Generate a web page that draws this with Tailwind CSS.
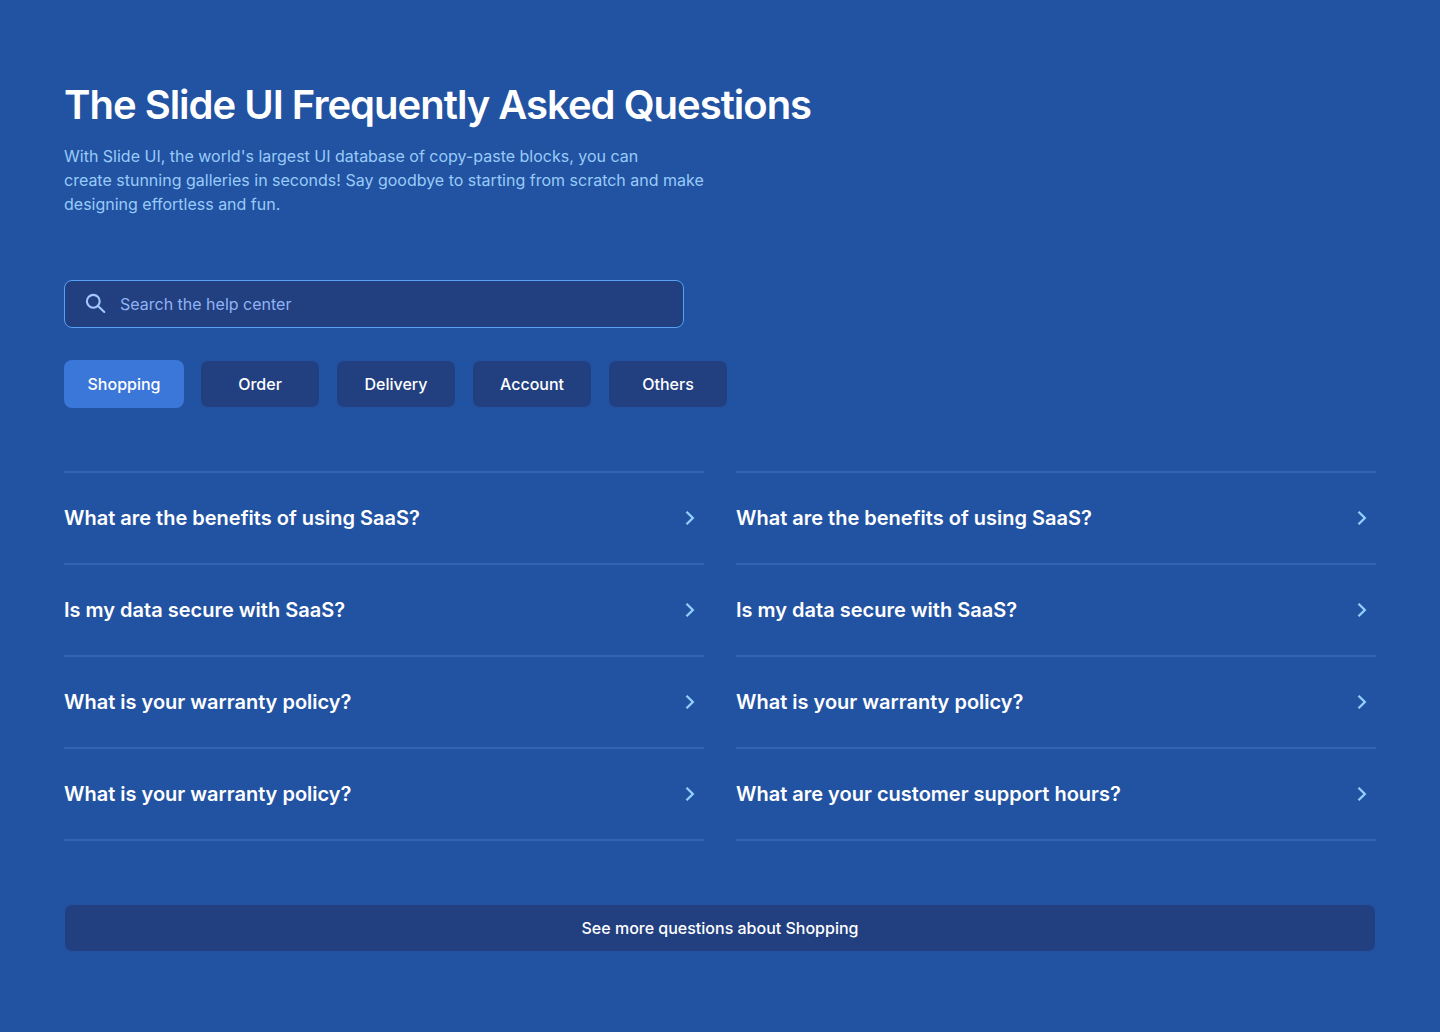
<!DOCTYPE html>
<html lang="en">
<head>
<meta charset="utf-8">
<meta name="viewport" content="width=device-width, initial-scale=1">
<title>The Slide UI Frequently Asked Questions</title>
<script src="https://cdn.jsdelivr.net/npm/@tailwindcss/browser@4"></script>
</head>
<body class="min-h-screen bg-[#2253a2] font-['Inter',sans-serif] text-white">
<svg class="hidden">
  <symbol id="chevron" viewBox="0 0 24 24"><path d="M8.500 5.700 14.800 12 8.500 18.300" fill="none" stroke="currentColor" stroke-width="2.300"/></symbol>
</svg>
<main class="px-16 py-20">
  <header class="max-w-3xl">
    <h1 class="text-[40px] leading-[50px] font-semibold tracking-tight">The Slide UI Frequently Asked Questions</h1>
    <p class="mt-3.5 text-base text-[#98cbf9]">With Slide UI, the world's largest UI database of copy-paste blocks, you can<br>create stunning galleries in seconds! Say goodbye to starting from scratch and make<br>designing effortless and fun.</p>
  </header>

  <form role="search" class="mt-16 max-w-[620px]">
    <div class="flex h-12 items-center gap-3 rounded-lg border border-[#56a0f5] bg-[#223f7f] px-[19px]">
      <svg class="size-6 shrink-0 text-[#a3c8ff]" viewBox="0 0 24 24" fill="none" stroke="currentColor" stroke-width="2.100" stroke-linecap="round"><circle cx="9.300" cy="9.300" r="6.400"/><path d="m14 14 6.300 6"/></svg>
      <input type="search" aria-label="Search the help center" placeholder="Search the help center" class="h-full w-full bg-transparent text-base outline-none placeholder:text-[#8fb4f5]">
    </div>
  </form>

  <nav aria-label="Categories" class="mt-8 flex flex-wrap gap-4">
    <button class="h-12 w-30 rounded-lg bg-[#3b76d9] font-medium">Shopping</button>
    <button class="h-12 w-30 rounded-lg border border-[#2253a2] bg-[#223f7f] font-medium">Order</button>
    <button class="h-12 w-30 rounded-lg border border-[#2253a2] bg-[#223f7f] font-medium">Delivery</button>
    <button class="h-12 w-30 rounded-lg border border-[#2253a2] bg-[#223f7f] font-medium">Account</button>
    <button class="h-12 w-30 rounded-lg border border-[#2253a2] bg-[#223f7f] font-medium">Others</button>
  </nav>

  <section aria-label="Questions" class="mt-[63px] grid gap-8 md:grid-cols-2">
    <ul class="divide-y-2 divide-[#3363b2] border-y-2 border-[#3363b2] text-xl font-semibold">
      <li><button class="flex h-[90px] w-full items-center justify-between pr-0.5 text-left">What are the benefits of using SaaS?<svg class="size-6 text-[#93d0fd]"><use href="#chevron"/></svg></button></li>
      <li><button class="flex h-[90px] w-full items-center justify-between pr-0.5 text-left">Is my data secure with SaaS?<svg class="size-6 text-[#93d0fd]"><use href="#chevron"/></svg></button></li>
      <li><button class="flex h-[90px] w-full items-center justify-between pr-0.5 text-left">What is your warranty policy?<svg class="size-6 text-[#93d0fd]"><use href="#chevron"/></svg></button></li>
      <li><button class="flex h-[90px] w-full items-center justify-between pr-0.5 text-left">What is your warranty policy?<svg class="size-6 text-[#93d0fd]"><use href="#chevron"/></svg></button></li>
    </ul>
    <ul class="divide-y-2 divide-[#3363b2] border-y-2 border-[#3363b2] text-xl font-semibold">
      <li><button class="flex h-[90px] w-full items-center justify-between pr-0.5 text-left">What are the benefits of using SaaS?<svg class="size-6 text-[#93d0fd]"><use href="#chevron"/></svg></button></li>
      <li><button class="flex h-[90px] w-full items-center justify-between pr-0.5 text-left">Is my data secure with SaaS?<svg class="size-6 text-[#93d0fd]"><use href="#chevron"/></svg></button></li>
      <li><button class="flex h-[90px] w-full items-center justify-between pr-0.5 text-left">What is your warranty policy?<svg class="size-6 text-[#93d0fd]"><use href="#chevron"/></svg></button></li>
      <li><button class="flex h-[90px] w-full items-center justify-between pr-0.5 text-left">What are your customer support hours?<svg class="size-6 text-[#93d0fd]"><use href="#chevron"/></svg></button></li>
    </ul>
  </section>

  <button class="mt-[63px] h-12 w-full rounded-lg border border-[#2253a2] bg-[#223f7f] font-medium">See more questions about Shopping</button>
</main>
</body>
</html>
